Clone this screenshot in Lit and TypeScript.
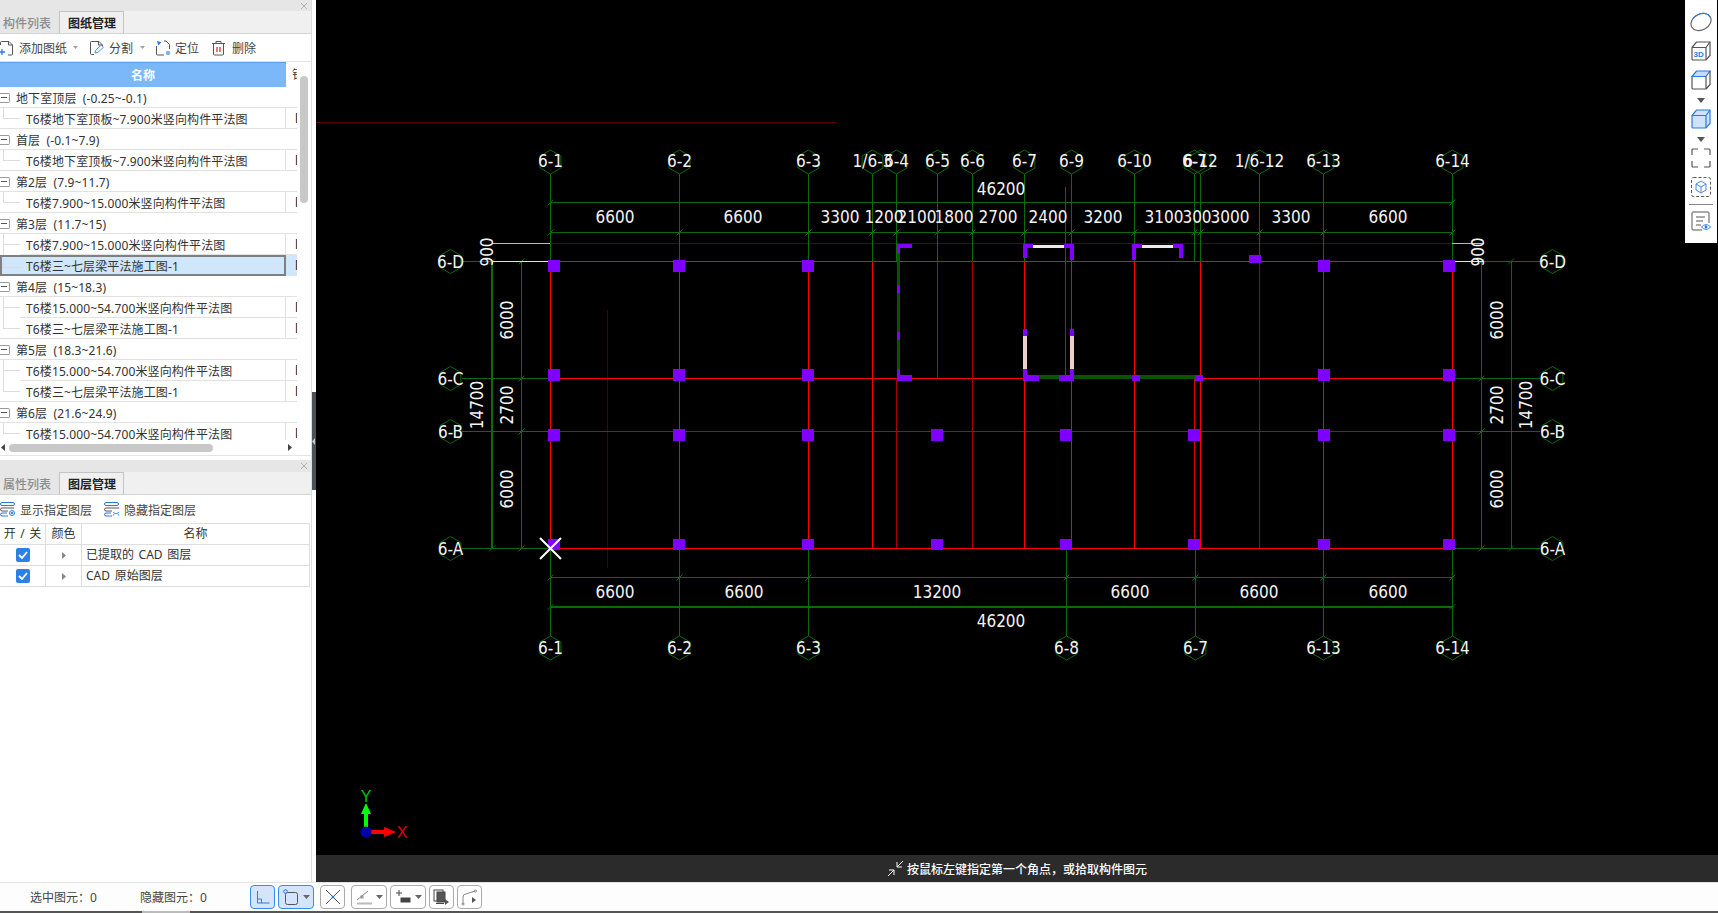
import { LitElement, html, svg, css } from "lit";
import { customElement } from "lit/decorators.js";

const GREEN = "#0b6b0b";
const WALL_GREEN = "#0b5200";
const PURPLE = "#8000ff";
const RED = "#ff0000";

const topAxes: [number, string][] = [
  [550, "6-1"], [679, "6-2"], [808, "6-3"], [872, "1/6-3"], [896, "6-4"],
  [937, "6-5"], [972, "6-6"], [1024, "6-7"], [1071, "6-9"], [1134, "6-10"],
  [1194, "6-7"], [1200, "6-12"], [1259, "1/6-12"], [1323, "6-13"], [1452, "6-14"],
];
const bottomAxes: [number, string][] = [
  [550, "6-1"], [679, "6-2"], [808, "6-3"], [1066, "6-8"], [1195, "6-7"], [1323, "6-13"], [1452, "6-14"],
];
const rowAxes: [number, string][] = [[261, "6-D"], [378, "6-C"], [431, "6-B"], [548, "6-A"]];

const topDims: [number, string][] = [
  [615, "6600"], [743, "6600"], [840, "3300"], [884, "1200"], [917, "2100"], [954, "1800"], [998, "2700"],
  [1048, "2400"], [1103, "3200"], [1164, "3100"], [1197, "300"], [1230, "3000"], [1291, "3300"], [1388, "6600"],
];
const bottomDims: [number, string][] = [
  [615, "6600"], [744, "6600"], [937, "13200"], [1130, "6600"], [1259, "6600"], [1388, "6600"],
];
const sideDims: [number, number, string][] = [
  [487, 252, "900"], [507, 320, "6000"], [507, 405, "2700"], [477, 405, "14700"], [507, 489, "6000"],
  [1478, 252, "900"], [1497, 320, "6000"], [1497, 405, "2700"], [1526, 405, "14700"], [1497, 489, "6000"],
];

// x, y1, y2, colour of the plan's vertical beams
const beams: [number, number, number, string][] = [
  [550, 261, 548, RED], [679, 261, 548, RED], [808, 261, 548, RED], [872, 261, 548, RED],
  [896, 378, 548, "#a80000"], [937, 261, 378, "#c80000"], [972, 261, 548, "#a80000"], [1024, 261, 548, RED],
  [1065, 187, 378, "#d80000"], [1071, 261, 548, RED], [1134, 261, 548, RED], [1194, 378, 548, "#d80000"],
  [1200, 261, 548, RED], [1259, 261, 548, "#b00000"], [1323, 261, 548, RED], [1452, 261, 548, RED],
];

// x, y, w, h of the square columns
const columnXs = [548, 673, 802, 1318, 1443];
const extraXs = [931, 1060, 1188];
const columns: number[][] = [
  ...columnXs.map((x) => [x, 260, 12, 12]),
  ...columnXs.map((x) => [x, 369, 12, 12]),
  ...[...columnXs, ...extraXs].map((x) => [x, 429, 12, 12]),
  ...[...columnXs, ...extraXs].map((x) => [x, 539, 12, 11]),
  [1249, 255, 12, 8],
];

// wall pieces, [colour, x, y, w, h]
const walls: [string, number, number, number, number][] = [
  [WALL_GREEN, 897, 254, 3, 115],
  [PURPLE, 897, 244, 15, 4], [PURPLE, 897, 244, 3, 10],
  [PURPLE, 897, 285, 3, 8], [PURPLE, 897, 332, 3, 8],
  [PURPLE, 897, 369, 3, 12], [PURPLE, 897, 375, 15, 6],
  ["#f0ecea", 1033, 245, 31, 3], [PURPLE, 1023, 244, 10, 4], [PURPLE, 1023, 244, 4, 14],
  [PURPLE, 1064, 244, 10, 4], [PURPLE, 1070, 244, 4, 16],
  ["#f0ecea", 1142, 245, 31, 3], [PURPLE, 1132, 244, 10, 4], [PURPLE, 1132, 244, 4, 16],
  [PURPLE, 1173, 244, 10, 4], [PURPLE, 1179, 244, 4, 14],
  ["#eccfca", 1023, 336, 4, 33], [PURPLE, 1023, 329, 4, 7],
  ["#eccfca", 1070, 336, 4, 33], [PURPLE, 1070, 329, 4, 7],
  [WALL_GREEN, 1039, 375, 160, 4],
  [PURPLE, 1023, 369, 4, 12], [PURPLE, 1023, 375, 16, 6],
  [PURPLE, 1059, 375, 15, 6], [PURPLE, 1070, 369, 4, 12],
  [PURPLE, 1132, 375, 8, 6], [PURPLE, 1195, 375, 8, 6],
];

@customElement("cad-plan")
export class CadPlan extends LitElement {
  static styles = css`
    :host {
      display: block;
      position: absolute;
      inset: 0;
    }
    svg {
      display: block;
    }
    .label {
      font-family: "DejaVu Sans", sans-serif;
      font-stretch: condensed;
      font-size: 17px;
      fill: #f4f4f4;
      text-anchor: middle;
    }
    .axis-letter {
      font-family: "Liberation Sans", sans-serif;
      font-size: 16px;
      text-anchor: middle;
    }
  `;

  line(x1: number, y1: number, x2: number, y2: number, color: string, w = 1) {
    return svg`<line x1=${x1} y1=${y1} x2=${x2} y2=${y2} stroke=${color} stroke-width=${w} shape-rendering="crispEdges"></line>`;
  }

  // dimension tick, the little slash on a dim line
  tick(x: number, y: number) {
    return svg`<line x1=${x - 3} y1=${y + 3} x2=${x + 3} y2=${y - 3} stroke=${GREEN}></line>`;
  }

  hex(cx: number, cy: number) {
    const r = 12;
    const pts = [0, 60, 120, 180, 240, 300]
      .map((a) => {
        const t = (a * Math.PI) / 180;
        return `${cx + r * Math.sin(t)},${cy - r * Math.cos(t)}`;
      })
      .join(" ");
    return svg`<polygon points=${pts} fill="none" stroke=${GREEN}></polygon>`;
  }

  text(x: number, y: number, t: string) {
    return svg`<text class="label" x=${x} y=${y + 6}>${t}</text>`;
  }

  sideText(x: number, y: number, t: string) {
    return svg`<text class="label" transform="translate(${x + 6} ${y}) rotate(-90)">${t}</text>`;
  }

  render() {
    // drawn in page coordinates, the canvas starts at x=316
    return html`<svg width="1402" height="855" viewBox="316 0 1402 855">
      ${this.line(316, 122.5, 837, 122.5, "#5a0000")}
      ${this.line(607.5, 310, 607.5, 568, "#4a0000")}
      ${this.line(550, 243.5, 1452, 243.5, "#600000")}

      <!-- dimension lines -->
      ${this.line(550, 202.5, 1452, 202.5, GREEN)}
      ${this.line(550, 232.5, 1452, 232.5, GREEN)}
      ${this.line(550, 577.5, 1452, 577.5, GREEN)}
      ${this.line(550, 607, 1452, 607, GREEN, 2)}
      ${this.line(492, 261, 492, 548, GREEN, 2)}
      ${this.line(521.5, 261, 521.5, 548, GREEN)}
      ${this.line(1481.5, 261, 1481.5, 548, GREEN)}
      ${this.line(1511, 261, 1511, 548, GREEN)}
      ${[550, 1452].map((x) => this.tick(x + 0.5, 202.5))}
      ${topAxes.map(([x]) => this.tick(x + 0.5, 232.5))}
      ${bottomAxes.map(([x]) => this.tick(x + 0.5, 577.5))}
      ${[550, 1452].map((x) => this.tick(x + 0.5, 607))}
      ${rowAxes.map(([y]) => this.tick(521.5, y + 0.5))}
      ${rowAxes.map(([y]) => this.tick(1481.5, y + 0.5))}
      ${[261, 548].map((y) => this.tick(492, y + 0.5))}
      ${[261, 548].map((y) => this.tick(1511, y + 0.5))}

      <!-- axes -->
      ${topAxes.map(([x]) => this.line(x + 0.5, 174, x + 0.5, 261, GREEN))}
      ${topAxes.map(([x]) => this.hex(x + 0.5, 162))}
      ${bottomAxes.map(([x]) => this.line(x + 0.5, 548, x + 0.5, 636, GREEN))}
      ${bottomAxes.map(([x]) => this.hex(x + 0.5, 648))}
      ${rowAxes.map(([y]) => this.line(462, y + 0.5, 550, y + 0.5, GREEN))}
      ${rowAxes.map(([y]) => this.line(1452, y + 0.5, 1540, y + 0.5, GREEN))}
      ${rowAxes.map(([y]) => this.hex(450.5, y + 0.5))}
      ${rowAxes.map(([y]) => this.hex(1552.5, y + 0.5))}
      ${this.line(492, 243.5, 550, 243.5, "#b8b8b8")}
      ${this.line(492, 261.5, 550, 261.5, "#e0e0e0")}
      ${this.line(1452, 243.5, 1484, 243.5, "#b8b8b8")}
      ${this.line(1452, 261.5, 1484, 261.5, "#e0e0e0")}

      <!-- beams -->
      ${rowAxes.map(([y]) => this.line(550, y + 0.5, 1452, y + 0.5, y === 431 ? "#c00000" : RED))}
      ${beams.map(([x, y1, y2, c]) => this.line(x + 0.5, y1, x + 0.5, y2, c))}

      <!-- walls and columns -->
      ${walls.map(([c, x, y, w, h]) => svg`<rect x=${x} y=${y} width=${w} height=${h} fill=${c}></rect>`)}
      ${columns.map(([x, y, w, h]) => svg`<rect x=${x} y=${y} width=${w} height=${h} fill=${PURPLE}></rect>`)}

      <!-- labels -->
      ${topAxes.map(([x, t]) => this.text(x + 0.5, 161, t))}
      ${bottomAxes.map(([x, t]) => this.text(x + 0.5, 648, t))}
      ${rowAxes.map(([y, t]) => this.text(450.5, y + 0.5, t))}
      ${rowAxes.map(([y, t]) => this.text(1552.5, y + 0.5, t))}
      ${topDims.map(([x, t]) => this.text(x, 217, t))}
      ${bottomDims.map(([x, t]) => this.text(x, 592, t))}
      ${this.text(1001, 189, "46200")}
      ${this.text(1001, 621, "46200")}
      ${sideDims.map(([x, y, t]) => this.sideText(x, y, t))}

      <!-- pick cursor -->
      <path d="M540 538 L561 559 M561 538 L540 559" stroke="#fff" stroke-width="2"></path>

      <!-- UCS marker -->
      <rect x="364" y="813" width="4" height="15" fill="#00ff00"></rect>
      <polygon points="366,803 371,814 361,814" fill="#00ff00"></polygon>
      <rect x="371" y="830" width="14" height="4" fill="#ff0000"></rect>
      <polygon points="396,832 384,827 384,837" fill="#ff0000"></polygon>
      <circle cx="366" cy="832" r="5.5" fill="#0000a8"></circle>
      <text class="axis-letter" x="366" y="802" fill="#00c800">Y</text>
      <text class="axis-letter" x="402" y="838" fill="#e00000">X</text>
    </svg>`;
  }
}

const caret = svg`<path d="M0 0h7L3.5 4z" fill="#666"></path>`;
const toolCaret = svg`<path d="M0 0h5L2.5 3z" fill="#a0a0a0"></path>`;

const toolIcons = {
  add: html`<svg width="16" height="16" viewBox="0 0 16 16" fill="none" stroke="#555">
    <path d="M1.5 5V2.5a1 1 0 0 1 1-1H10l3.5 3.5v9a1 1 0 0 1-1 1H9"></path>
    <path d="M9.5 1.5V5h4"></path>
    <path d="M0 12h6M3 9v6" stroke="#2a7ae2" stroke-width="1.3"></path>
  </svg>`,
  split: html`<svg width="16" height="16" viewBox="0 0 16 16" fill="none" stroke="#555">
    <path d="M5 14.5H2.5a1 1 0 0 1-1-1v-11a1 1 0 0 1 1-1H10l3.5 3.5V6"></path>
    <path d="M9.5 1.5V5h4"></path>
    <path d="M6 13l.7-2.8L12.3 5l2.2 2.2-5.6 5.2z" stroke="#4a90e2"></path>
  </svg>`,
  locate: html`<svg width="16" height="16" viewBox="0 0 16 16" fill="none" stroke="#555">
    <path d="M1.5 6v8a1 1 0 0 0 1 1H9M9 1h2l3.5 3.5V9"></path>
    <path d="M2 1l4.5 1.2L3.2 5.5z" fill="#2a7ae2" stroke="none"></path>
    <circle cx="13" cy="13" r="2.2" fill="#7fb2ee" stroke="none"></circle>
  </svg>`,
  trash: html`<svg width="15" height="16" viewBox="0 0 15 16" fill="none" stroke="#555">
    <path d="M1 3.5h13M5 3.5V1.5h5v2"></path>
    <path d="M2.5 3.5V14a1 1 0 0 0 1 1h8a1 1 0 0 0 1-1V3.5"></path>
    <path d="M6 7v5M9 7v5" stroke="#e02020" stroke-width="1.2"></path>
  </svg>`,
  layerShow: html`<svg width="16" height="15" viewBox="0 0 16 15" fill="none" stroke="#2a7ae2">
    <rect x="0.5" y="0.5" width="14" height="3" rx="1.5"></rect>
    <path d="M14 6H2a1.5 1.5 0 0 0 0 3h6" stroke="#555"></path>
    <path d="M7 11H2a1.5 1.5 0 0 0 0 3h6"></path>
    <circle cx="12" cy="11" r="2.5"></circle>
    <circle cx="12" cy="11" r="0.8" fill="#2a7ae2"></circle>
  </svg>`,
  layerHide: html`<svg width="16" height="15" viewBox="0 0 16 15" fill="none" stroke="#2a7ae2">
    <rect x="0.5" y="0.5" width="14" height="3" rx="1.5"></rect>
    <path d="M15 6H2a1.5 1.5 0 0 0 0 3h6" stroke="#555"></path>
    <path d="M7 11H2a1.5 1.5 0 0 0 0 3h6"></path>
    <path d="M9 10c1.5 2 4.5 2 6 0M10 12l-.8 1.5M14 12l.8 1.5"></path>
  </svg>`,
};

const railIcons = {
  sphere: html`<svg width="22" height="20" viewBox="0 0 22 20" fill="none" stroke-width="1.2">
    <ellipse cx="11" cy="10" rx="10.5" ry="8" transform="rotate(-28 11 10)" stroke="#666"></ellipse>
    <ellipse cx="11" cy="10" rx="10.5" ry="8" transform="rotate(-28 11 10)" stroke="#2a7ae2" pathLength="100" stroke-dasharray="35 65" stroke-dashoffset="-65"></ellipse>
  </svg>`,
  box3d: html`<svg width="20" height="20" viewBox="0 0 20 20" fill="none" stroke="#555" stroke-width="1.2">
    <path d="M1 6.5 5.5 1H19v13.5L15 19H2a1 1 0 0 1-1-1z"></path>
    <path d="M1 6.5h14V19M15 6.5 19 1"></path>
    <text x="2.5" y="16" font-family="Liberation Sans, sans-serif" font-size="8" font-weight="700" fill="#2a7ae2" stroke="none">3D</text>
  </svg>`,
  cubeTop: html`<svg width="20" height="20" viewBox="0 0 20 20" fill="none" stroke="#555" stroke-width="1.2">
    <path d="M1 6.5 5.5 1H19l-4 5.5H1z" fill="#c5dcf8" stroke="#2a7ae2"></path>
    <path d="M1 6.5V18a1 1 0 0 0 1 1h13V6.5M15 19l4-4.5V1"></path>
  </svg>`,
  cubeFull: html`<svg width="20" height="20" viewBox="0 0 20 20" fill="#cfe2fa" stroke="#2a7ae2" stroke-width="1.2">
    <path d="M1 6.5 5.5 1H19v13.5L15 19H2a1 1 0 0 1-1-1z"></path>
    <path d="M1 6.5h14V19M15 6.5 19 1" fill="none"></path>
  </svg>`,
  corners: html`<svg width="20" height="20" viewBox="0 0 20 20" fill="none" stroke="#555" stroke-width="1.2">
    <path d="M1 7V2a1 1 0 0 1 1-1h5M13 1h5a1 1 0 0 1 1 1v5M19 13v5a1 1 0 0 1-1 1h-5M7 19H2a1 1 0 0 1-1-1v-5"></path>
  </svg>`,
  dashed: html`<svg width="20" height="20" viewBox="0 0 20 20" fill="none" stroke="#555">
    <rect x="0.5" y="0.5" width="19" height="19" rx="2" stroke-dasharray="3 2"></rect>
    <path d="M10 4l5 3v6l-5 3-5-3V7z" stroke="#4a8ae0"></path>
    <path d="M5 7l5 3 5-3M10 10v6" stroke="#4a8ae0"></path>
  </svg>`,
  docEye: html`<svg width="20" height="20" viewBox="0 0 20 20" fill="none" stroke="#555">
    <path d="M11 19H2a1 1 0 0 1-1-1V2a1 1 0 0 1 1-1h15a1 1 0 0 1 1 1v10"></path>
    <path d="M5 6h9M5 10h7M5 14h5"></path>
    <path d="M10.5 16c2.2-3 7-3 9 0-2 3-6.800 3-9 0z" stroke="#2a7ae2" fill="#fff"></path>
    <circle cx="15" cy="16" r="1.4" fill="#2a7ae2" stroke="none"></circle>
  </svg>`,
};

type Row = { label: string; group?: boolean; mid?: boolean; selected?: boolean };

const B1 = "T6楼地下室顶板~7.900米竖向构件平法图";
const B2 = "T6楼7.900~15.000米竖向构件平法图";
const B3 = "T6楼三~七层梁平法施工图-1";
const B4 = "T6楼15.000~54.700米竖向构件平法图";

const rows: Row[] = [
  { label: "地下室顶层 (-0.25~-0.1)", group: true },
  { label: B1 },
  { label: "首层 (-0.1~7.9)", group: true },
  { label: B1 },
  { label: "第2层 (7.9~11.7)", group: true },
  { label: B2 },
  { label: "第3层 (11.7~15)", group: true },
  { label: B2, mid: true },
  { label: B3, selected: true },
  { label: "第4层 (15~18.3)", group: true },
  { label: B4, mid: true },
  { label: B3 },
  { label: "第5层 (18.3~21.6)", group: true },
  { label: B4, mid: true },
  { label: B3 },
  { label: "第6层 (21.6~24.9)", group: true },
  { label: B4 },
];

@customElement("app-root")
export class AppRoot extends LitElement {
  static styles = css`
    :host {
      display: flex;
      flex-direction: column;
      width: 1718px;
      height: 913px;
      overflow: hidden;
      background: #fff;
      color: #333;
      font-family: "Noto Sans", "Noto Sans CJK SC", sans-serif;
      font-size: 12px;
    }
    .main {
      display: flex;
      height: 882px;
    }
    .side {
      width: 312px;
      box-sizing: border-box;
      border-right: 1px solid #dcdcdc;
      display: flex;
      flex-direction: column;
      flex: none;
    }
    .splitter {
      width: 4px;
      flex: none;
      display: flex;
      align-items: center;
    }
    .splitter-handle {
      width: 4px;
      height: 98px;
      background: #4b5157;
      display: flex;
      align-items: center;
    }
    .canvas {
      flex: 1;
      display: flex;
      flex-direction: column;
      background: #000;
    }
    .view {
      flex: 1;
      position: relative;
    }
    .prompt {
      height: 27px;
      background: #2b2b2b;
      color: #fff;
      display: flex;
      align-items: center;
      padding-left: 571px;
      gap: 3px;
      font-weight: 500;
    }
    .panel {
      display: flex;
      flex-direction: column;
    }
    .panel--tree {
      height: 456px;
      border-bottom: 1px solid #e4e4e4;
      margin-bottom: 4px;
      box-sizing: border-box;
    }
    .strip {
      height: 11px;
      background: #e6e6e6;
      display: flex;
      justify-content: flex-end;
      align-items: center;
      padding-right: 3px;
    }
    .strip--tall {
      height: 12px;
    }
    .tabs {
      height: 22px;
      background: #f0f0f0;
      border-bottom: 1px solid #d4d4d4;
      display: flex;
    }
    .tab {
      display: flex;
      align-items: center;
      padding: 1px 0 0 3px;
      box-sizing: border-box;
      color: #8c8c8c;
      background: #e6e6e6;
      width: 59px;
      font-weight: 500;
    }
    .tab--on {
      width: 65px;
      padding-left: 8px;
      color: #222;
      background: #f0f0f0;
      font-weight: 700;
      border: 1px solid #c4c4c4;
      border-bottom: none;
    }
    .tools {
      height: 27px;
      display: flex;
      align-items: center;
      border-bottom: 1px solid #e4e4e4;
    }
    .tools--plain {
      height: 28px;
      border-bottom: none;
      padding-top: 1px;
      box-sizing: border-box;
    }
    .tool {
      display: flex;
      align-items: center;
      gap: 4px;
      color: #444;
    }
    .tool svg {
      flex: none;
    }
    .tree-head {
      height: 25px;
      display: flex;
      width: 297px;
      overflow: hidden;
      flex: none;
    }
    .tree-head__name {
      width: 286px;
      flex: none;
      background: #7ab8fa;
      border-top: 1px solid #55a0f2;
      box-sizing: border-box;
      color: #fff;
      font-weight: 700;
      display: flex;
      align-items: center;
      justify-content: center;
    }
    .tree-head__rest {
      padding-left: 6px;
      white-space: nowrap;
      line-height: 25px;
    }
    .tree {
      position: relative;
      height: 353px;
    }
    .tree-rows {
      width: 297px;
      height: 353px;
      overflow: hidden;
    }
    .row {
      height: 21px;
      display: flex;
      align-items: center;
      white-space: nowrap;
      box-sizing: border-box;
      letter-spacing: 0.12px;
      background: linear-gradient(#e2e2e2, #e2e2e2) left bottom / 100% 1px no-repeat;
    }
    .row--inset {
      background: linear-gradient(#e2e2e2, #e2e2e2) 20px bottom / 100% 1px no-repeat;
    }
    .row--group {
      word-spacing: 3px;
    }
    .row--selected {
      background: #d0e6fb;
    }
    .row__name {
      width: 286px;
      height: 100%;
      flex: none;
      box-sizing: border-box;
      display: flex;
      align-items: center;
      border-right: 1px solid #e2e2e2;
    }
    .row--group .row__name {
      border-right: none;
    }
    .row--selected .row__name {
      border: 2px solid #808080;
    }
    .row--selected .branch {
      margin-left: 1px;
    }
    .row__rest {
      padding-left: 9px;
      color: #222;
    }
    .toggle {
      width: 10px;
      height: 10px;
      flex: none;
      border: 1px solid #9a9a9a;
      border-left: none;
      border-radius: 0 2px 2px 0;
      box-sizing: border-box;
      margin-right: 6px;
      display: flex;
      align-items: center;
    }
    .toggle i {
      display: block;
      width: 6px;
      height: 1px;
      background: #555;
      margin-left: 1px;
    }
    .branch {
      width: 17px;
      height: 100%;
      margin-left: 3px;
      margin-right: 6px;
      flex: none;
      background:
        linear-gradient(#dcdcdc, #dcdcdc) left top / 1px 11px no-repeat,
        linear-gradient(#dcdcdc, #dcdcdc) left 10px / 100% 1px no-repeat;
    }
    .branch--mid {
      background:
        linear-gradient(#dcdcdc, #dcdcdc) left top / 1px 100% no-repeat,
        linear-gradient(#dcdcdc, #dcdcdc) left 10px / 100% 1px no-repeat;
    }
    .vthumb {
      position: absolute;
      left: 300px;
      top: -11px;
      width: 8px;
      height: 127px;
      border-radius: 4px;
      background: #c8c8c8;
    }
    .hscroll {
      height: 15px;
      width: 297px;
      display: flex;
      align-items: center;
      justify-content: space-between;
      padding: 0 5px 0 1px;
      box-sizing: border-box;
    }
    .hscroll__thumb {
      width: 204px;
      height: 8px;
      border-radius: 4px;
      background: #c8c8c8;
      margin-right: auto;
      margin-left: 4px;
    }
    .layers {
      display: grid;
      grid-template-columns: 46px 36px 228px;
      width: 310px;
      border-top: 1px solid #dedede;
      word-spacing: 1.5px;
    }
    .cell {
      height: 21px;
      box-sizing: border-box;
      border-right: 1px solid #dedede;
      border-bottom: 1px solid #dedede;
      display: flex;
      align-items: center;
      justify-content: center;
      white-space: nowrap;
    }
    .cell--text {
      padding-bottom: 2px;
    }
    .cell--name {
      justify-content: flex-start;
      padding-left: 4px;
    }
    .check {
      width: 14px;
      height: 14px;
      border-radius: 2px;
      background: #2d80e8;
      display: flex;
      align-items: center;
      justify-content: center;
    }
    .bottom {
      height: 31px;
      display: flex;
      flex-direction: column;
      background: #fdfdfd;
      border-top: 1px solid #e2e2e2;
      box-sizing: border-box;
    }
    .bottom__bar {
      flex: 1;
      display: flex;
      align-items: center;
    }
    .stat {
      color: #444;
      white-space: nowrap;
    }
    .btn {
      height: 24px;
      box-sizing: border-box;
      border: 1px solid #aaa;
      border-radius: 4px;
      background: #fff;
      display: flex;
      align-items: center;
      justify-content: center;
      flex: none;
    }
    .btn--on {
      background: #d3e4fb;
      border-color: #3a8bef;
    }
    .taskbar {
      height: 2px;
      display: flex;
      background: #555;
    }
    .taskbar i {
      display: block;
      width: 48px;
      margin-left: 142px;
      background: #bbb;
    }
    .rail {
      position: absolute;
      top: 0;
      right: 1px;
      width: 32px;
      background: #fff;
      display: flex;
      flex-direction: column;
      align-items: center;
      padding: 12px 0;
      box-sizing: border-box;
      height: 243px;
    }
    .rail__icon {
      height: 20px;
      margin-bottom: 9px;
    }
    .rail__icon--last {
      margin-bottom: 0;
    }
    .rail__caret {
      width: 0;
      height: 0;
      border: 4px solid transparent;
      border-top: 5px solid #555;
      border-bottom: none;
      margin: -1px 0 6px;
    }
    .rail__sep {
      width: 24px;
      height: 1px;
      background: #888;
      margin: -2px 0 6px;
    }
  `;

  renderTabs(a: string, b: string, tall = false) {
    return html`<div class="strip ${tall ? "strip--tall" : ""}">
        <svg width="8" height="8" viewBox="0 0 8 8" stroke="#b4b4b4"><path d="M1 1l6 6M7 1L1 7"></path></svg>
      </div>
      <div class="tabs">
        <div class="tab">${a}</div>
        <div class="tab tab--on">${b}</div>
      </div>`;
  }

  renderRow(r: Row) {
    if (r.group) {
      return html`<div class="row row--group">
        <div class="row__name">
          <span class="toggle"><i></i></span>
          <span>${r.label}</span>
        </div>
      </div>`;
    }
    const cls = `row ${r.mid ? "row--inset" : ""} ${r.selected ? "row--selected" : ""}`;
    return html`<div class=${cls}>
      <div class="row__name">
        <span class="branch ${r.mid ? "branch--mid" : ""}"></span>
        <span>${r.label}</span>
      </div>
      <span class="row__rest">l</span>
    </div>`;
  }

  render() {
    return html`<div class="main">
        <div class="side">
          <div class="panel panel--tree">
            ${this.renderTabs("构件列表", "图纸管理")}
            <div class="tools">
              <div class="tool" style="margin-left:-1px">${toolIcons.add}<span>添加图纸</span></div>
              <svg style="margin-left:6px" width="5" height="3">${toolCaret}</svg>
              <div class="tool" style="margin-left:11px">${toolIcons.split}<span>分割</span></div>
              <svg style="margin-left:7px" width="5" height="3">${toolCaret}</svg>
              <div class="tool" style="margin-left:10px">${toolIcons.locate}<span>定位</span></div>
              <div class="tool" style="margin-left:12px;gap:6px">${toolIcons.trash}<span>删除</span></div>
            </div>
            <div class="tree-head">
              <div class="tree-head__name">名称</div>
              <div class="tree-head__rest">钢筋</div>
            </div>
            <div class="tree">
              <div class="tree-rows">${rows.map((r) => this.renderRow(r))}</div>
              <div class="vthumb"></div>
            </div>
            <div class="hscroll">
              <svg width="4" height="7"><path d="M4 0v7L0 3.5z" fill="#444"></path></svg>
              <div class="hscroll__thumb"></div>
              <svg width="4" height="7"><path d="M0 0v7l4-3.5z" fill="#444"></path></svg>
            </div>
          </div>
          <div class="panel">
            ${this.renderTabs("属性列表", "图层管理", true)}
            <div class="tools tools--plain">
              <div class="tool">${toolIcons.layerShow}<span>显示指定图层</span></div>
              <div class="tool" style="margin-left:12px">${toolIcons.layerHide}<span>隐藏指定图层</span></div>
            </div>
            <div class="layers">
              <div class="cell cell--text">开 / 关</div>
              <div class="cell cell--text">颜色</div>
              <div class="cell cell--text">名称</div>
              ${["已提取的 CAD 图层", "CAD 原始图层"].map(
                (n) => html`<div class="cell">
                    <span class="check">
                      <svg width="10" height="8" viewBox="0 0 10 8" fill="none" stroke="#fff" stroke-width="1.8"><path d="M1 4l3 3 5-6"></path></svg>
                    </span>
                  </div>
                  <div class="cell">
                    <svg width="4" height="7"><path d="M0 0v7l4-3.5z" fill="#888"></path></svg>
                  </div>
                  <div class="cell cell--text cell--name">${n}</div>`
              )}
            </div>
          </div>
        </div>
        <div class="splitter">
          <div class="splitter-handle">
            <svg width="4" height="7"><path d="M3 0v7L0 3.5z" fill="#c8c8c8"></path></svg>
          </div>
        </div>
        <div class="canvas">
          <div class="view">
            <cad-plan></cad-plan>
            <div class="rail">
              <div class="rail__icon">${railIcons.sphere}</div>
              <div class="rail__icon">${railIcons.box3d}</div>
              <div class="rail__icon">${railIcons.cubeTop}</div>
              <div class="rail__caret"></div>
              <div class="rail__icon">${railIcons.cubeFull}</div>
              <div class="rail__caret"></div>
              <div class="rail__icon">${railIcons.corners}</div>
              <div class="rail__icon">${railIcons.dashed}</div>
              <div class="rail__sep"></div>
              <div class="rail__icon rail__icon--last">${railIcons.docEye}</div>
            </div>
          </div>
          <div class="prompt">
            <svg width="17" height="17" viewBox="0 0 17 17" fill="none" stroke="#fff">
              <path d="M16 1L10 7M10 2v5h5M1 16l6-6M2 10h5v5"></path>
            </svg>
            <span>按鼠标左键指定第一个角点，或拾取构件图元</span>
          </div>
        </div>
      </div>
      <div class="bottom">
        <div class="bottom__bar">
          <span class="stat" style="margin-left:30px;width:110px">选中图元：0</span>
          <span class="stat" style="width:110px">隐藏图元：0</span>
          <div class="btn btn--on" style="width:25px">
            <svg width="14" height="14" viewBox="0 0 14 14" fill="none" stroke="#2a7ae2"><path d="M1.5 1v12h12M1.5 9h4v4"></path></svg>
          </div>
          <div class="btn btn--on" style="width:36px;margin-left:3px;gap:4px">
            <svg width="16" height="16" viewBox="0 0 16 16" fill="none" stroke="#555"><rect x="2.5" y="3.5" width="12" height="12" rx="2"></rect><circle cx="2.5" cy="2.5" r="1.8" fill="#d3e4fb" stroke="#2a7ae2"></circle></svg>
            <svg width="7" height="4">${caret}</svg>
          </div>
          <div class="btn" style="width:25px;margin-left:6px">
            <svg width="18" height="18" viewBox="0 0 18 18" fill="none" stroke="#555"><path d="M2 2l14 14M16 2L2 16"></path><circle cx="9" cy="9" r="1" fill="#2a7ae2" stroke="#2a7ae2"></circle></svg>
          </div>
          <div class="btn" style="width:36px;margin-left:6px;gap:4px">
            <svg width="16" height="16" viewBox="0 0 16 16" fill="none" stroke="#888"><path d="M1 11L12 2"></path><path d="M1 14.5h15" stroke="#bbb" stroke-width="2"></path><rect x="5" y="7" width="2" height="2"></rect></svg>
            <svg width="7" height="4">${caret}</svg>
          </div>
          <div class="btn" style="width:36px;margin-left:3px;gap:4px">
            <svg width="16" height="16" viewBox="0 0 16 16" fill="none" stroke="#444"><path d="M1 4h6M4 1v6"></path><rect x="6" y="9" width="9" height="4" fill="#444"></rect></svg>
            <svg width="7" height="4">${caret}</svg>
          </div>
          <div class="btn" style="width:25px;margin-left:3px">
            <svg width="17" height="17" viewBox="0 0 17 17" fill="none" stroke="#444"><rect x="1" y="1" width="9" height="11" fill="#fff"></rect><rect x="4" y="3" width="8" height="10" fill="#555"></rect><path d="M3 14.5h8"></path><path d="M12 10l4 3-4 3z" fill="#555" stroke="none"></path></svg>
          </div>
          <div class="btn" style="width:25px;margin-left:3px">
            <svg width="17" height="17" viewBox="0 0 17 17" fill="none" stroke="#888"><path d="M2 15V8a3 3 0 0 1 3-3l9-3"></path><circle cx="2" cy="15" r="1"></circle><circle cx="14.5" cy="2" r="1"></circle><path d="M11 8l4 3-4 3z" fill="#555" stroke="none"></path></svg>
          </div>
        </div>
        <div class="taskbar"><i></i></div>
      </div>`;
  }
}
